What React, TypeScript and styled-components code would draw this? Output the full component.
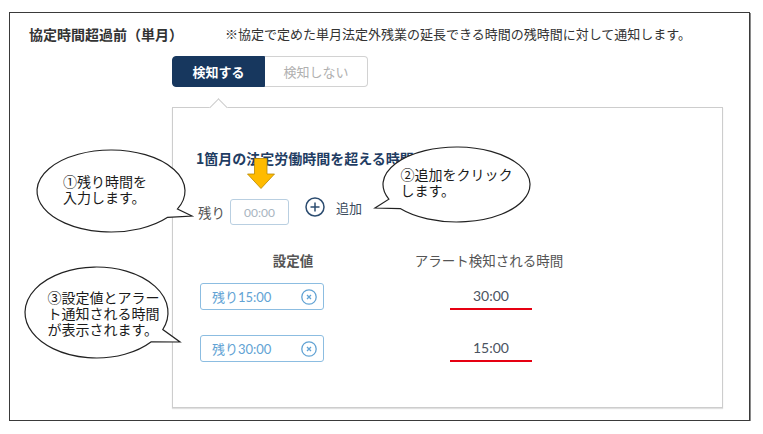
import React from "react";
import styled, { createGlobalStyle } from "styled-components";

const GlobalStyle = createGlobalStyle`
  html, body { margin: 0; padding: 0; background: #fff; }
  body {
    font-family: "Noto Sans CJK JP", "Noto Sans", sans-serif;
    color: #333;
  }
  * { box-sizing: border-box; }
`;

const Page = styled.div`
  padding: 12px 0 0 9px;
`;

const Frame = styled.section`
  position: relative;
  width: 741px;
  height: 409px;
  border: 1px solid #3a3a3a;
  box-shadow: 1px 1px 0 #8a8a8a;
  padding: 11px 0 0 19px;
`;

const HeaderRow = styled.div`
  display: flex;
  align-items: center;
  gap: 50px;
  height: 20px;
`;

const Title = styled.h2`
  margin: 0;
  width: 146px;
  font-size: 14px;
  font-weight: 700;
  line-height: 20px;
  color: #333;
  white-space: nowrap;
`;

const Note = styled.p`
  margin: 0;
  font-size: 13px;
  line-height: 20px;
  color: #333;
  white-space: nowrap;
`;

const Body = styled.div`
  margin: 12px 0 0 143px;
`;

const Toggle = styled.div`
  display: flex;
  width: 196px;
  height: 31px;
`;

const ToggleButton = styled.button<{ $active?: boolean }>`
  height: 100%;
  margin: 0;
  padding: 0;
  font-family: inherit;
  font-size: 13px;
  cursor: pointer;
  ${({ $active }) =>
    $active
      ? `
    width: 93px;
    background: #17375e;
    color: #fff;
    font-weight: 700;
    border: 1px solid #17375e;
    border-radius: 4px 0 0 4px;
  `
      : `
    width: 103px;
    background: #fff;
    color: #b0b0b0;
    font-weight: 400;
    border: 1px solid #d2d2d2;
    border-left: 0;
    border-radius: 0 4px 4px 0;
  `}
`;

const Panel = styled.div`
  position: relative;
  margin-top: 20px;
  width: 551px;
  height: 301px;
  border: 1px solid #cdcdcd;
  box-shadow: 0 1px 1px rgba(0, 0, 0, 0.12);
  padding: 40px 0 0 23px;
  background: #fff;

  &::before {
    content: "";
    position: absolute;
    top: -7px;
    left: 39px;
    width: 12px;
    height: 12px;
    background: #fff;
    border-top: 1px solid #cdcdcd;
    border-left: 1px solid #cdcdcd;
    transform: rotate(45deg);
  }
`;

const PanelTitle = styled.h3`
  margin: 0;
  font-size: 14px;
  font-weight: 700;
  line-height: 20px;
  color: #1f3d63;
  white-space: nowrap;
`;

const InputRow = styled.div`
  display: flex;
  align-items: center;
  margin-top: 31px;
  padding-left: 2px;
  height: 26px;
`;

const FieldLabel = styled.span`
  width: 27px;
  font-size: 13.5px;
  color: #555;
`;

const TimeInput = styled.input`
  width: 59px;
  height: 26px;
  margin-left: 5px;
  border: 1px solid #b9cfe1;
  border-radius: 3px;
  text-align: center;
  font-family: "Lato", "Noto Sans CJK JP", sans-serif;
  font-size: 12px;
  color: #555;
  outline: none;

  &::placeholder {
    color: #a8b4c0;
  }
`;

const AddButton = styled.button`
  display: flex;
  align-items: center;
  gap: 11px;
  margin: 0 0 10px 16px;
  padding: 0;
  border: 0;
  background: none;
  font-family: inherit;
  font-size: 13px;
  color: #3a4a5c;
  cursor: pointer;
`;

const Table = styled.div`
  margin-top: 25px;
  padding-left: 4px;
`;

const TableRow = styled.div<{ $gap: number }>`
  display: grid;
  grid-template-columns: 186px 206px;
  align-items: start;
  margin-top: ${({ $gap }) => $gap}px;
`;

const HeadCell = styled.div<{ $bold?: boolean }>`
  text-align: center;
  font-size: 13.5px;
  line-height: 20px;
  color: #555;
  font-weight: ${({ $bold }) => ($bold ? 700 : 400)};
  white-space: nowrap;
`;

const Chip = styled.div`
  display: flex;
  align-items: center;
  justify-content: space-between;
  width: 124px;
  height: 27px;
  border: 1px solid #8cbde1;
  border-radius: 3px;
  padding: 0 6px 0 11px;
  font-family: "Lato", "Noto Sans CJK JP", sans-serif;
  font-size: 13px;
  color: #62a3d4;
`;

const RemoveIcon = styled.svg`
  display: block;
  width: 16px;
  height: 16px;
`;

const ValueCell = styled.div`
  display: flex;
  flex-direction: column;
  align-items: center;
  padding-left: 4px;
`;

const ValueText = styled.span`
  font-family: "Lato", "Noto Sans CJK JP", sans-serif;
  font-size: 14px;
  line-height: 25px;
  color: #4a5360;
`;

const RedLine = styled.span`
  display: block;
  width: 82px;
  height: 2px;
  background: #e60012;
`;

/* speech bubbles drawn over the form */
const Bubble = styled.div<{ $x: number; $y: number; $w: number; $h: number }>`
  position: absolute;
  left: ${({ $x }) => $x}px;
  top: ${({ $y }) => $y}px;
  width: ${({ $w }) => $w}px;
  height: ${({ $h }) => $h}px;
`;

const BubbleShape = styled.svg`
  position: absolute;
  left: 0;
  top: 0;
  overflow: visible;
`;

const BubbleText = styled.div<{ $pad: string }>`
  position: relative;
  display: flex;
  align-items: center;
  justify-content: center;
  height: 100%;
  padding: ${({ $pad }) => $pad};
  font-size: 14px;
  line-height: 16px;
  color: #1a1a1a;
  white-space: nowrap;
`;

const BubbleLines = styled.div`
  text-align: left;

  span {
    display: block;
  }
`;

const Pointer = styled.svg`
  position: absolute;
  left: 237px;
  top: 145px;
  overflow: visible;
`;

type CalloutProps = {
  x: number;
  y: number;
  w: number;
  h: number;
  tip: [number, number];
  ta: number;
  tb: number;
  pad: string;
  lines: string[];
};

function Callout({ x, y, w, h, tip, ta, tb, pad, lines }: CalloutProps) {
  const rx = w / 2;
  const ry = h / 2;
  const at = (deg: number) => {
    const r = (deg * Math.PI) / 180;
    return [rx + rx * Math.cos(r), ry + ry * Math.sin(r)];
  };
  const [bx, by] = at(tb);
  const [ax, ay] = at(ta);
  const d = `M${bx} ${by} A${rx} ${ry} 0 1 1 ${ax} ${ay} L${tip[0]} ${tip[1]} Z`;
  return (
    <Bubble $x={x} $y={y} $w={w} $h={h}>
      <BubbleShape width={w} height={h} viewBox={`0 0 ${w} ${h}`}>
        <path d={d} fill="#fff" stroke="#222" strokeWidth={1.2} strokeLinejoin="miter" />
      </BubbleShape>
      <BubbleText $pad={pad}>
        <BubbleLines>
          {lines.map((l) => (
            <span key={l}>{l}</span>
          ))}
        </BubbleLines>
      </BubbleText>
    </Bubble>
  );
}

function PlusCircle() {
  return (
    <svg width="20" height="20" viewBox="0 0 20 20">
      <circle cx="10" cy="10" r="9" fill="none" stroke="#2c4c70" strokeWidth="1.5" />
      <path d="M10 5.5v9M5.5 10h9" stroke="#2c4c70" strokeWidth="1.5" />
    </svg>
  );
}

function Remove() {
  return (
    <RemoveIcon viewBox="0 0 16 16">
      <circle cx="8" cy="8" r="7.2" fill="none" stroke="#62a3d4" strokeWidth="1.3" />
      <path d="M6 6l4 4M10 6l-4 4" stroke="#62a3d4" strokeWidth="1.3" />
    </RemoveIcon>
  );
}

const rows = [
  { setting: "残り15:00", alert: "30:00" },
  { setting: "残り30:00", alert: "15:00" },
];

export default function App() {
  return (
    <>
      <GlobalStyle />
      <Page>
        <Frame>
          <HeaderRow>
            <Title>協定時間超過前（単月）</Title>
            <Note>※協定で定めた単月法定外残業の延長できる時間の残時間に対して通知します。</Note>
          </HeaderRow>
          <Body>
            <Toggle>
              <ToggleButton $active>検知する</ToggleButton>
              <ToggleButton>検知しない</ToggleButton>
            </Toggle>
            <Panel>
              <PanelTitle>1箇月の法定労働時間を超える時間</PanelTitle>
              <InputRow>
                <FieldLabel>残り</FieldLabel>
                <TimeInput placeholder="00:00" />
                <AddButton>
                  <PlusCircle />
                  追加
                </AddButton>
              </InputRow>
              <Table>
                <TableRow $gap={0}>
                  <HeadCell $bold>設定値</HeadCell>
                  <HeadCell>アラート検知される時間</HeadCell>
                </TableRow>
                {rows.map((r, i) => (
                  <TableRow key={r.setting} $gap={i === 0 ? 13 : 25}>
                    <Chip>
                      {r.setting}
                      <Remove />
                    </Chip>
                    <ValueCell>
                      <ValueText>{r.alert}</ValueText>
                      <RedLine />
                    </ValueCell>
                  </TableRow>
                ))}
              </Table>
            </Panel>
          </Body>

          <Pointer width="28" height="31" viewBox="0 0 28 31">
            <path
              d="M7.5 0.5h12.5v15.5h7.5L14 30.5 0.5 16h7z"
              fill="#ffbb00"
              stroke="#b98800"
              strokeWidth="0.8"
            />
          </Pointer>

          <Callout
            x={27}
            y={137}
            w={148}
            h={82}
            tip={[155, 66]}
            ta={26}
            tb={40}
            pad="0 12px 4px 0"
            lines={["①残り時間を", "入力します。"]}
          />
          <Callout
            x={373}
            y={134}
            w={147}
            h={75}
            tip={[-8, 61]}
            ta={140}
            tb={157}
            pad="0 0 6px 0"
            lines={["②追加をクリック", "します。"]}
          />
          <Callout
            x={15}
            y={254}
            w={143}
            h={91}
            tip={[155, 75]}
            ta={22}
            tb={40}
            pad="0 0 0 14px"
            lines={["③設定値とアラー", "ト通知される時間", "が表示されます。"]}
          />
        </Frame>
      </Page>
    </>
  );
}
